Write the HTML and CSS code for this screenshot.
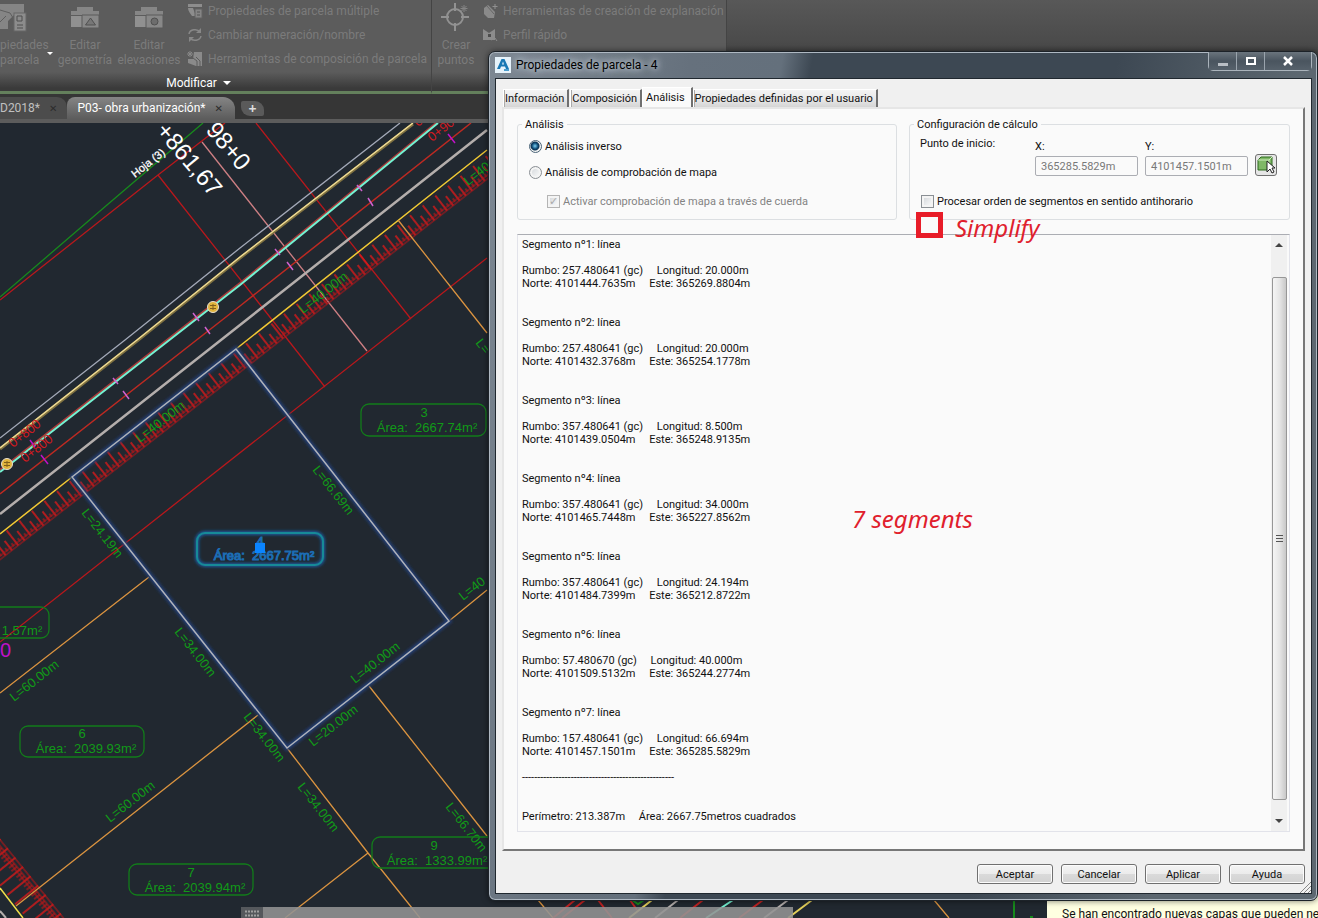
FILE: index.html
```html
<!DOCTYPE html>
<html lang="es">
<head>
<meta charset="utf-8">
<title>Propiedades de parcela - 4</title>
<link rel="stylesheet" href="styles.css">
</head>
<body>
<div class="app">
  <header class="ribbon">
    <section class="panel panel-modify">
      <div class="panel-body">
        <button class="big big-first" type="button">
          <svg width="32" height="34" viewBox="0 0 32 34"><path d="M0 2h24v10h-9L8 19v8H0z" fill="#858585"/><path d="M0 8l10 3 5 8-4 8M0 20l6-6" fill="none" stroke="#5e5e5e"/><rect x="14" y="11" width="12" height="18" fill="#8c8c8c" stroke="#666"/><path d="M17 14h5v5h-5zM17 23h6M17 26h6" fill="none" stroke="#4e4e4e"/></svg>
          <span>piedades</span><span>parcela</span>
        </button>
        <i class="caret caret-small"></i>
        <button class="big big-geo" type="button">
          <svg width="32" height="34" viewBox="0 0 32 34"><path d="M2 9h6V5h16v4h6v4H2z" fill="#868686"/><path d="M2 14h28v11H2z" fill="#909090"/><path d="M13 13h17v13H13z" fill="#888" stroke="#5a5a5a"/><path d="M21.500 16l5 7h-10z" fill="#777" stroke="#505050"/></svg>
          <span>Editar</span><span>geometría</span>
        </button>
        <button class="big big-elev" type="button">
          <svg width="32" height="34" viewBox="0 0 32 34"><path d="M2 9h6V5h16v4h6v4H2z" fill="#868686"/><path d="M2 14h28v11H2z" fill="#909090"/><path d="M13 13h17v13H13z" fill="#888" stroke="#5a5a5a"/><circle cx="21.500" cy="19.500" r="3.500" fill="#6d6d6d" stroke="#505050"/></svg>
          <span>Editar</span><span>elevaciones</span>
        </button>
        <div class="list">
          <button type="button"><svg width="16" height="16"><path d="M1 1h14v3H1zM1 5h5l3 8H5C3 10 1 8 1 5z" fill="#8d8d8d"/><path d="M8 6h7v9H8z" fill="#858585" stroke="#626262"/><path d="M10 9h3M10 12h3" stroke="#555"/></svg>Propiedades de parcela múltiple</button>
          <button type="button"><svg width="16" height="16"><path d="M2 7a6 5 0 0 1 11-2M14 9a6 5 0 0 1-11 2" fill="none" stroke="#888" stroke-width="1.500"/><path d="M14 1v5H9zM2 15v-5h5z" fill="#888"/></svg>Cambiar numeración/nombre</button>
          <button type="button"><svg width="16" height="16"><path d="M7 1h8v14H9L1 12V8h5z" fill="#8a8a8a"/><path d="M6 7l4 3v5M9 6l4 4v5" fill="none" stroke="#5c5c5c"/><path d="M3 0v6M0 3h6M1 1l4 4M5 1L1 5" stroke="#888"/></svg>Herramientas de composición de parcela</button>
        </div>
      </div>
      <div class="panel-title">Modificar <i class="caret"></i></div>
    </section>
    <section class="panel panel-create">
      <div class="panel-body">
        <button class="big big-points" type="button">
          <svg width="32" height="34" viewBox="0 0 32 34"><g fill="none" stroke="#929292" stroke-width="2"><circle cx="15" cy="15" r="8"/><path d="M15 1v8M15 21v8M1 15h8M21 15h8"/></g><path d="M24 3v7M20.500 6.500h7M21.500 4l5 5M26.500 4l-5 5" stroke="#858585"/></svg>
          <span>Crear</span><span>puntos</span>
        </button>
        <div class="list">
          <button type="button"><svg width="16" height="16"><path d="M2 5l4-3 7 7-1 6H6l-4-4z" fill="#8a8a8a"/><path d="M5 3l7 8" stroke="#666"/><path d="M13 1v5M10.500 3.500h5" stroke="#909090"/></svg>Herramientas de creación de explanación</button>
          <button type="button"><svg width="16" height="16"><path d="M1 2l6 4 6-4v11H1z" fill="#8c8c8c"/><path d="M6 7h3v3H6z" fill="#4d4d4d"/><path d="M9 13l4-2 2 3" fill="none" stroke="#8c8c8c"/></svg>Perfil rápido</button>
        </div>
      </div>
      <div class="panel-title"></div>
    </section>
  </header>

  <nav class="doc-tabs">
    <a class="doc-tab first" href="#d">D2018* <b>✕</b></a>
    <a class="doc-tab active" href="#p">P03- obra urbanización* <b>✕</b></a>
    <button class="doc-add" type="button" aria-label="Nuevo">+</button>
  </nav>

  <main class="canvas">
    <svg class="drawing" viewBox="0 123 1318 795" preserveAspectRatio="xMinYMin slice">
      <defs>
        <pattern id="hatch" width="16" height="21" patternUnits="userSpaceOnUse">
          <path d="M1 1v19M9 8v12" stroke="#e81818" stroke-width="1.400"/>
          <path d="M5 14v4M13 14v4" stroke="#d81414"/>
          <path d="M0 17h16M0 20h16" stroke="#b81418" stroke-width="1"/>
        </pattern>
        <pattern id="hatch2" width="12" height="33" patternUnits="userSpaceOnUse">
          <path d="M1 0v30" stroke="#e81818" stroke-width="1.400"/>
          <path d="M5 5v7M9 5v7" stroke="#d81414"/>
          <path d="M0 1h16M0 5h16M0 8h16" stroke="#c81414"/>
        </pattern>
        <filter id="glow" x="-20%" y="-20%" width="140%" height="140%"><feGaussianBlur stdDeviation="1.500"/></filter>
      </defs>
      <g fill="none" stroke-width="1.300">
        <path d="M0 297L107 205L203 123" stroke="#178a1c"/>
        <path d="M0 300L158 175L225 123M158 175L325 387M256 123L411 319M0 642L487 258" stroke="#b8181c"/>
        <path d="M202 142L367 351" stroke="#cf8084"/>
        <path d="M0 438L125 340L240 248L400 123" stroke="#a3a9b8"/>
        <path d="M0 449L137 341L240 258L413 124" stroke="#7f7140" stroke-width="3"/>
        <path d="M0 448L137 340L240 257L413 123" stroke="#f0dc94" stroke-width="1.500"/>
        <path d="M0 470L240 283L436 123" stroke="#a83c3c" stroke-width="2"/>
        <path d="M0 472L240 285L438 123" stroke="#74f2d2" stroke-width="2"/>
        <path d="M0 494L240 306L471 123" stroke="#bd2a22" stroke-width="1.500"/>
        <path d="M0 514L240 325L487 130" stroke="#b4aeac" stroke-width="2.500"/>
      </g>
      <g transform="translate(-20 550) rotate(-38)"><rect width="660" height="21" fill="url(#hatch)"/></g>
      <path d="M0 534L72 477L236 349L487 150" stroke="#f2ca34" stroke-width="1.500" fill="none"/>
      <g transform="translate(0 838) rotate(51)"><rect x="-40" width="160" height="31" fill="url(#hatch2)"/></g>
      <path d="M0 888L23 918" stroke="#f2e04a" stroke-width="1.500"/>
      <path d="M0 911L6 918" stroke="#b4aeac" stroke-width="2"/>
      <g fill="none" stroke="#db9440" stroke-width="1.300">
        <path d="M398 220L487 333M449 621L487 590M149 577L0 693M258 715L16 906M369 686L487 836M287 748L368 853L420 918M368 853L285 918"/>
        <path d="M538 900L553 918M934 900L949 918"/>
      </g>
      <g fill="none" stroke-width="2">
        <path d="M652 900L629 918M812 900L788 918" stroke="#e3cf5a"/>
        <path d="M678 900L655 918M788 900L764 918" stroke="#b4aeac"/>
        <path d="M703 900L680 918M763 900L739 918M598 900L612 918M630 900L637 910M575 900L553 918M585 900L562 918" stroke="#c22222"/>
        <path d="M733 900L706 918" stroke="#74f2d2"/>
        <path d="M632 900L638 904L644 900M1014 901V918M1030 917h3" stroke="#178a1c"/>
      </g>
      <g stroke="#d062d0" stroke-width="1.500">
        <path d="M193 313l6 8M205 327l5 7M275 249l5 6M287 262l6 8M357 185l5 6M368 198l5 8M113 378l5 6M123 391l6 8"/>
        <path d="M448 134l7 9M30 440l5 7M41 455l7 9" stroke="#c012c8"/>
      </g>
      <g fill="#e0b43c" stroke="#e8e0d0"><circle cx="213" cy="307" r="5.500"/><circle cx="7" cy="464" r="5.500"/></g>
      <path d="M210 305.500h6M210 308.500h6M213 304v6M4 462.500h6M4 465.500h6M7 461v6" stroke="#80601c"/>
      <path d="M72 477L236 349L449 621L287 748Z" fill="none" stroke="#203c74" stroke-width="5" filter="url(#glow)"/>
      <path d="M72 477L236 349L449 621L287 748Z" fill="none" stroke="#b0b3ba" stroke-width="1.500"/>

      <g class="cad green">
        <text transform="translate(355 684) rotate(-38)">L=40.00m</text>
        <text transform="translate(313 747) rotate(-38)">L=20.00m</text>
        <text transform="translate(297 787) rotate(52)">L=34.00m</text>
        <text transform="translate(243 717) rotate(52)">L=34.00m</text>
        <text transform="translate(174 632) rotate(52)">L=34.00m</text>
        <text transform="translate(81 513) rotate(52)">L=24.19m</text>
        <text transform="translate(312 470) rotate(52)">L=66.69m</text>
        <text transform="translate(445 807) rotate(52)">L=66.70m</text>
        <text transform="translate(475 343) rotate(52)">L=</text>
        <text transform="translate(463 601) rotate(-38)">L=40</text>
        <text transform="translate(14 702) rotate(-38)">L=60.00m</text>
        <text transform="translate(110 823) rotate(-38)">L=60.00m</text>
        <text transform="translate(140 443) rotate(-38)">L=40.00m</text>
        <text transform="translate(303 314) rotate(-38)">L=40.00m</text>
        <text transform="translate(468 186) rotate(-38)">L=40</text>
      </g>
      <g class="cad red">
        <text transform="translate(13 448) rotate(-38)">0+800</text>
        <text transform="translate(25 463) rotate(-38)">0+800</text>
        <text transform="translate(418 127) rotate(-38)">0</text>
        <text transform="translate(432 142) rotate(-38)">0+90</text>
      </g>
      <g fill="none" stroke="#127c1a" stroke-width="1.300">
        <rect x="361" y="404" width="125" height="32" rx="8"/>
        <rect x="20" y="726" width="124" height="31" rx="8"/>
        <rect x="129" y="864" width="124" height="31" rx="8"/>
        <rect x="372" y="837" width="125" height="31" rx="8"/>
        <rect x="-75" y="607" width="124" height="31" rx="8"/>
      </g>
      <g class="cad green area">
        <text x="424" y="417">3</text><text x="427" y="432">Área: &#160;2667.74m²</text>
        <text x="82" y="738">6</text><text x="86" y="753">Área: &#160;2039.93m²</text>
        <text x="191" y="877">7</text><text x="195" y="892">Área: &#160;2039.94m²</text>
        <text x="434" y="850">9</text><text x="437" y="865">Área: &#160;1333.99m²</text>
        <text x="22" y="635">1.57m²</text>
      </g>
      <rect x="197" y="533" width="126" height="32" rx="8" fill="none" stroke="#1a5ca0" stroke-width="4" filter="url(#glow)"/>
      <rect x="197" y="533" width="126" height="32" rx="8" fill="none" stroke="#178a98" stroke-width="2"/>
      <g class="cad area selected">
        <text x="260" y="546">4</text><text x="264" y="560">Área: &#160;2667.75m²</text>
      </g>
      <rect x="255" y="543" width="10" height="10" fill="#0a84ff"/>
      <text class="cad magenta" x="0" y="657">0</text>
      <g class="cad white">
        <text transform="translate(155 131) rotate(50)">+861,67</text>
        <text transform="translate(202 127) rotate(50)">'98+0</text>
      </g>
      <text class="cad sheet" transform="translate(135 178) rotate(-38)">Hoja (3)</text>
    </svg>
    <div class="hscroll"><svg width="22" height="11"><rect width="22" height="11" fill="#55585c"/><path d="M4 4.500h15M4 8.500h15" stroke="#a0a0a0" stroke-width="2" stroke-dasharray="2 1"/></svg></div>
  </main>
</div>

<aside class="balloon">Se han encontrado nuevas capas que pueden necesitar</aside>

<section class="dialog" role="dialog" aria-label="Propiedades de parcela - 4">
  <header class="titlebar">
    <svg width="16" height="16"><rect width="16" height="16" fill="#e6f2fa"/><path d="M2 12L6.500 2h3L14 12h-3l-1-2.500H6L5 12z" fill="#1a78b4"/><path d="M7 7.500h2L8 4.500z" fill="#e6f2fa"/><path d="M9 12h5v2H9z" fill="#4a9ccc"/></svg>
    <h1>Propiedades de parcela - 4</h1>
    <div class="winbtns">
      <button type="button" aria-label="Minimizar"><svg width="12" height="12"><rect x="1" y="8" width="10" height="3" fill="#b8bec4"/></svg></button>
      <button type="button" aria-label="Maximizar"><svg width="12" height="12"><rect x="2" y="3" width="8" height="6" fill="none" stroke="#fff" stroke-width="2"/></svg></button>
      <button type="button" aria-label="Cerrar"><svg width="12" height="12"><path d="M2 2l8 8M10 2l-8 8" stroke="#fff" stroke-width="2.500"/></svg></button>
    </div>
  </header>
  <div class="client">
    <div class="tabs" role="tablist">
      <button type="button" role="tab">Información</button>
      <button type="button" role="tab">Composición</button>
      <button type="button" role="tab" class="on" aria-selected="true">Análisis</button>
      <button type="button" role="tab">Propiedades definidas por el usuario</button>
    </div>
    <div class="page">
      <div class="groups">
        <fieldset class="analysis">
          <legend>Análisis</legend>
          <label><input type="radio" name="mode" checked>Análisis inverso</label>
          <label><input type="radio" name="mode">Análisis de comprobación de mapa</label>
          <label class="off"><input type="checkbox" checked disabled>Activar comprobación de mapa a través de cuerda</label>
        </fieldset>
        <fieldset class="config">
          <legend>Configuración de cálculo</legend>
          <div class="start">
            <span class="start-label">Punto de inicio:</span>
            <label>X:<input type="text" value="365285.5829m" disabled></label>
            <label>Y:<input type="text" value="4101457.1501m" disabled></label>
            <button class="pick" type="button" aria-label="Designar punto"><svg width="20" height="20"><path d="M2 5l3-3h11v10l-3 3H2z" fill="#7fb866" stroke="#2c6a1c"/><path d="M2 5h11v10M13 5l3-3" fill="none" stroke="#d0ecc0"/><path d="M11 6v11l3-3 2 4 2-1-2-4h3z" fill="#fff" stroke="#222"/></svg></button>
          </div>
          <label class="ccw"><input type="checkbox">Procesar orden de segmentos en sentido antihorario</label>
        </fieldset>
      </div>
      <div class="report">
        <textarea rows="45" readonly aria-label="Informe">Segmento nº1: línea

Rumbo: 257.480641 (gc)     Longitud: 20.000m
Norte: 4101444.7635m     Este: 365269.8804m


Segmento nº2: línea

Rumbo: 257.480641 (gc)     Longitud: 20.000m
Norte: 4101432.3768m     Este: 365254.1778m


Segmento nº3: línea

Rumbo: 357.480641 (gc)     Longitud: 8.500m
Norte: 4101439.0504m     Este: 365248.9135m


Segmento nº4: línea

Rumbo: 357.480641 (gc)     Longitud: 34.000m
Norte: 4101465.7448m     Este: 365227.8562m


Segmento nº5: línea

Rumbo: 357.480641 (gc)     Longitud: 24.194m
Norte: 4101484.7399m     Este: 365212.8722m


Segmento nº6: línea

Rumbo: 57.480670 (gc)     Longitud: 40.000m
Norte: 4101509.5132m     Este: 365244.2774m


Segmento nº7: línea

Rumbo: 157.480641 (gc)     Longitud: 66.694m
Norte: 4101457.1501m     Este: 365285.5829m

--------------------------------------------------


Perímetro: 213.387m     Área: 2667.75metros cuadrados</textarea>
        <div class="vscroll"><i class="up"></i><div class="thumb"><i></i><i></i><i></i></div><i class="down"></i></div>
      </div>
    </div>
    <footer class="actions">
      <button type="button">Aceptar</button>
      <button type="button">Cancelar</button>
      <button type="button">Aplicar</button>
      <button type="button">Ayuda</button>
    </footer>
    <svg class="grip" width="12" height="12"><path d="M1 12L12 1M5 12l7-7M9 12l3-3" stroke="#888"/></svg>
  </div>
  <i class="mark-box"></i>
  <em class="mark mark-simplify">Simplify</em>
  <em class="mark mark-count">7 segments</em>
</section>
</body>
</html>
```

FILE: styles.css
```css
* { box-sizing: border-box; }
body { margin: 0; background: #212830; font: 11px/13px Roboto, sans-serif; color: #111; overflow: hidden; }
button, input, textarea { font: inherit; color: inherit; }
button { padding: 0; border: 0; background: none; }

.app { display: flex; flex-direction: column; min-height: 100vh; }

/* ribbon */
.ribbon { display: flex; height: 94px; background: linear-gradient(#585858, #4a4a4a 45px, #3a3a3a 60px, #363636); font-size: 12px; line-height: 15px; color: #7b7b7b; }
.panel { display: flex; flex-direction: column; min-width: 0; background: linear-gradient(#5c5c5c 72px, #3a3a3a 88px); border-right: 1px solid #444; border-bottom: 3px solid #64805c; }
.panel-modify { flex: 0 0 432px; }
.panel-create { flex: 0 0 295px; }
.panel-body { display: flex; height: 75px; }
.big { display: flex; flex: none; flex-direction: column; align-items: center; padding-top: 2px; }
.big svg { margin-bottom: 2px; }
.big-first { width: 45px; align-items: flex-start; }
.big-geo { width: 64px; }
.big-elev { width: 64px; }
.big-points { width: 48px; }
.list { display: flex; flex-direction: column; padding: 3px 0 0 6px; gap: 8px; }
.list button { display: flex; align-items: center; gap: 5px; height: 16px; white-space: nowrap; }
.list svg { flex: none; }
.panel-create .list { padding-left: 2px; }
.panel-title { display: flex; align-items: center; justify-content: center; gap: 6px; padding-right: 34px; height: 16px; color: #fff; }
.caret { border: 4px solid transparent; border-top-color: #fff; border-bottom: 0; }
.caret-small { border-width: 3px 3px 0; align-self: flex-end; margin: 0 0 20px 2px; }

/* drawing tabs */
.doc-tabs { display: flex; align-items: flex-end; height: 29px; padding-top: 3px; background: #363636; border-bottom: 4px solid #5c5c5c; font-size: 12px; }
.doc-tab { display: flex; align-items: center; gap: 9px; height: 22px; color: #c0c0c0; text-decoration: none; background: #4c4c4c; border-radius: 0 10px 0 0; padding: 0 10px 0 0; white-space: nowrap; }
.doc-tab b { font: 10px "DejaVu Sans", sans-serif; color: #2c2c2c; }
.doc-tab.active { color: #fff; background: linear-gradient(#858585, #5c5c5c); border-radius: 8px 12px 0 0; padding: 0 12px 0 10px; }
.doc-add { width: 23px; height: 15px; margin: 0 0 3px 6px; background: #5a5a5a; color: #ddd; border-radius: 2px 9px 2px 9px; font: bold 14px/14px "Noto Sans", sans-serif; }

/* drawing area */
.canvas { position: relative; flex: 1; background: #212830; overflow: hidden; }
.drawing { display: block; width: 100%; height: 100%; min-width: 1318px; }
.cad { font: 13px "Liberation Sans", sans-serif; }
.green { fill: #119a18; }
.red { fill: #d01a20; }
.area { font-size: 13px; text-anchor: middle; }
.selected { fill: #1c8cae; stroke: #1c6cb4; stroke-width: 1px; }
.magenta { font-size: 20px; fill: #c012c8; }
.white { font-size: 24px; fill: #fff; }
.sheet { font-size: 11px; fill: #fff; stroke: #fff; stroke-width: .3px; }
.hscroll { position: absolute; left: 241px; bottom: 0; width: 552px; height: 11px; background: #939393e0; }
.hscroll svg { display: block; }

.balloon { position: absolute; left: 1047px; right: 0; bottom: 0; height: 25px; padding: 12px 0 0 15px; overflow: hidden; white-space: nowrap; background: #ffffe1; font-size: 12px; line-height: 18px; }

/* dialog window */
.dialog { position: absolute; left: 488px; right: 0; top: 51px; padding: 0 5px 6px 6px; background: linear-gradient(100deg, #7d8893, #66717d 200px, #64707c 290px, #3d4853 320px, #3d4853 620px, #5c6770 800px); border: 1px solid #1c2228; border-radius: 7px; box-shadow: inset 0 0 0 1px #aeb8c2, 0 0 6px #0008; }
.titlebar { display: flex; align-items: center; gap: 5px; height: 26px; }
.titlebar h1 { flex: 1; margin: 0; font: 12px/16px Roboto, sans-serif; color: #000; text-shadow: 0 0 8px #cfd8e0, 0 0 6px #cfd8e0; }
.winbtns { display: flex; align-self: flex-start; border: 1px solid #aab3bb; border-top: 0; border-radius: 0 0 5px 5px; }
.winbtns button { display: flex; align-items: center; justify-content: center; width: 28px; height: 18px; background: linear-gradient(#6a747d, #4a555f 9px, #56616b); border-right: 1px solid #9aa4ad; }
.winbtns button:last-child { width: 46px; border: 0; }
.client { position: relative; background: #f0f0f0; border: 1px solid #20282f; padding: 8px 6px 9px; }
.tabs { display: flex; align-items: flex-end; padding-left: 1px; height: 20px; }
.tabs button { height: 18px; padding: 0 3px 0 1px; white-space: nowrap; background: linear-gradient(#f4f4f4, #e9e9e9 50%, #d5d5d5); border: 1px solid #fff; border-right: 2px solid #707070; border-bottom: 0; box-shadow: inset 1px 0 #aaa; }
.tabs button + button { margin-left: 1px; }
.tabs button.on { height: 20px; padding: 0 6px 0 3px; background: #fafafa; box-shadow: none; margin-left: 0; }
.tabs .on + button { margin-left: 0; }
.page { background: #fafafa; border: 2px solid #e6e6e6; border-right-color: #777; border-bottom-color: #777; padding: 9px 13px 17px 13px; }
.groups { display: grid; grid-template-columns: 380fr 381fr; gap: 12px; }
fieldset { min-width: 0; height: 102px; margin: 0; border: 1px solid #dcdfe2; border-radius: 3px; padding: 0 10px; }
legend { padding: 0 3px; margin-left: -6px; }
label { display: flex; align-items: center; }
input[type=radio], input[type=checkbox] { appearance: none; flex: none; width: 13px; height: 13px; margin: 0 3px 0 0; border: 1px solid #8a8f94; background: linear-gradient(135deg, #cfd3d7, #fff); box-shadow: inset 0 0 0 2px #f4f4f4; }
input[type=radio] { border-radius: 50%; }
input[type=radio]:checked { border-color: #4a6478; background: radial-gradient(circle at 5px 5px, #7ad0f4, #0c4a74 3px, #0a3250 4px, #f4f4f4 5px); box-shadow: none; }
.analysis label { height: 26px; margin-left: 1px; }
.analysis legend + label { margin-top: 2px; }
.analysis .off { margin: 3px 0 0 19px; color: #838383; }
.off input { position: relative; border-color: #b4b4b4; }
.off input::after { content: "✓"; position: absolute; left: 1px; top: -1px; font: bold 11px/13px "DejaVu Sans", sans-serif; color: #aaa; }
.start { display: flex; align-items: flex-end; gap: 7px; }
.start-label { flex: 1; align-self: flex-start; margin-top: 6px; }
.start label { display: block; margin-top: 9px; }
.start input { display: block; width: 103px; height: 20px; margin-top: 3px; padding: 0 5px; border: 1px solid #abadb3; border-radius: 2px; background: #fafafa; color: #787878; }
.pick { display: flex; align-items: center; justify-content: center; width: 22px; height: 22px; margin: 0 2px 0 0; border: 1px solid #707070; border-radius: 3px; background: #e6e6e6; }
.ccw { margin: 19px 0 0 1px; }
.report { display: flex; margin-top: 14px; border: 1px solid #e2e3ea; border-top-color: #abadb3; padding-right: 2px; }
.report textarea { flex: 1; display: block; resize: none; overflow: hidden; border: 0; outline: 0; padding: 3px 4px 8px; background: transparent; line-height: 13px; }
.vscroll { display: flex; flex-direction: column; align-items: center; width: 16px; background: #f0f0f0; padding: 8px 0 8px; }
.vscroll .up { border: 4px solid transparent; border-top: 0; border-bottom-color: #444; }
.vscroll .down { border: 4px solid transparent; border-bottom: 0; border-top-color: #444; }
.thumb { flex: 1; display: flex; flex-direction: column; align-items: center; justify-content: center; gap: 2px; width: 15px; margin: 30px 0 19px; border: 1px solid #979797; border-radius: 2px; background: linear-gradient(90deg, #f5f5f5, #e6e6e6 50%, #c8c8c8); }
.thumb i { width: 7px; height: 1px; background: #555; }
.actions { display: flex; justify-content: flex-end; gap: 8px; padding-top: 13px; }
.actions button { width: 76px; height: 20px; border: 1px solid #707070; border-radius: 3px; background: linear-gradient(#f4f4f4, #ebebeb 50%, #dadada 50%, #d2d2d2); box-shadow: inset 0 0 0 1px #fcfcfc; }
.grip { position: absolute; right: 0; bottom: 0; }

/* red annotations over the dialog */
.mark-box { position: absolute; left: 427px; top: 160px; width: 27px; height: 26px; border: 5px solid #e81c28; background: #fafafa; }
.mark { position: absolute; font: italic 24px/30px "Noto Sans", sans-serif; color: #e0202c; }
.mark-simplify { left: 466px; top: 161px; }
.mark-count { left: 363px; top: 452px; }
```
